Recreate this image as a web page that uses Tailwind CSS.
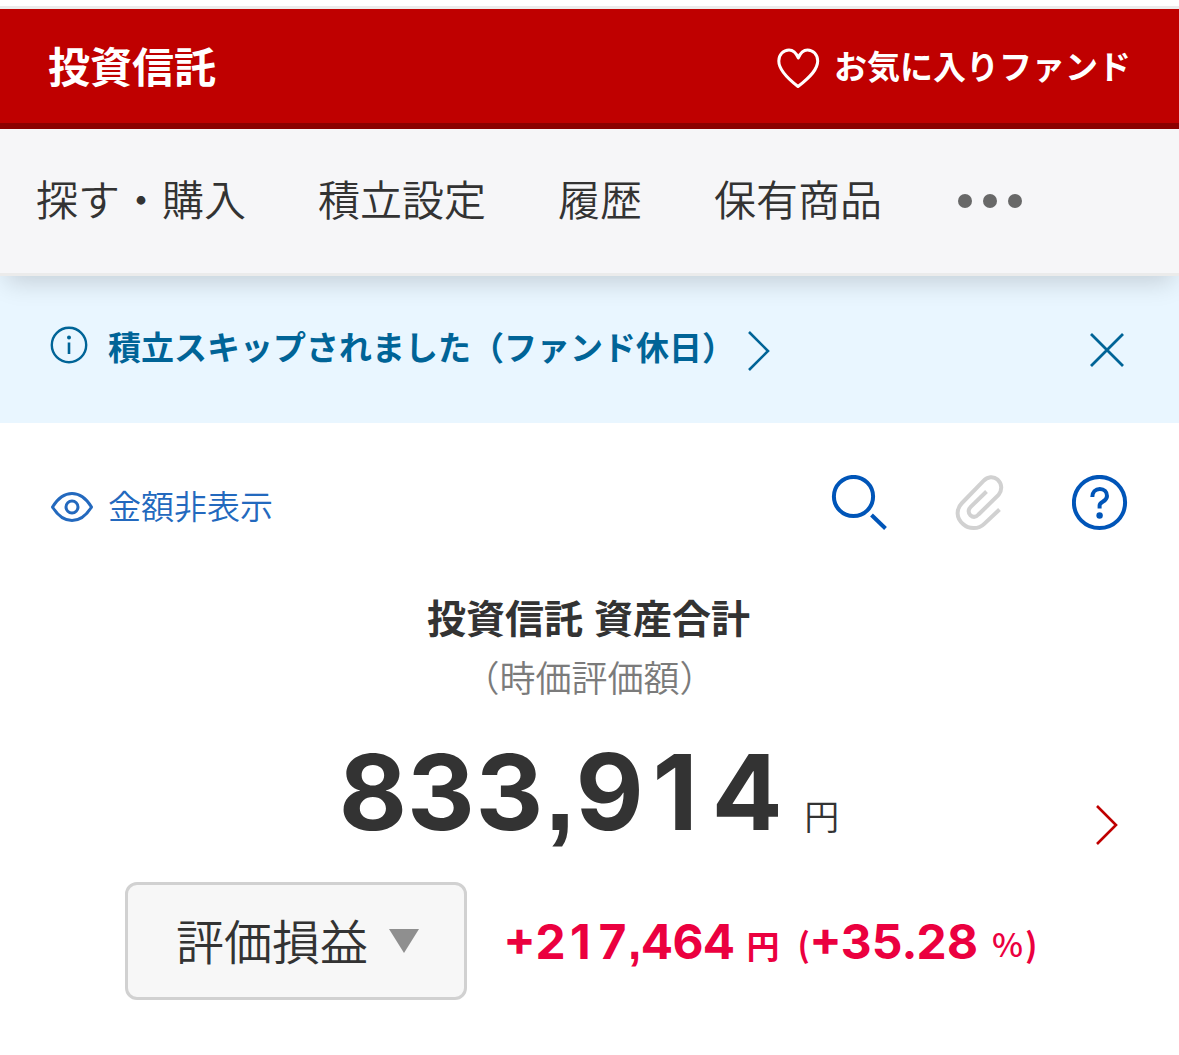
<!DOCTYPE html>
<html lang="ja">
<head>
<meta charset="UTF-8">
<meta name="viewport" content="width=device-width, initial-scale=1.0">
<title>投資信託</title>
<script src="https://cdn.jsdelivr.net/npm/@tailwindcss/browser@4"></script>
</head>
<body class="bg-white text-[#333] font-['Noto_Sans_CJK_JP',sans-serif] w-[1179px] h-[1055px] overflow-hidden">
<div class="h-[9px] border-b-3 border-[#ebebeb]"></div>
<header class="h-[120px] bg-[#bf0000] border-b-6 border-[#8c0000] text-white flex items-center justify-between pl-12 pr-12">
<h1 class="text-[42px] leading-none font-bold -mt-0.5">投資信託</h1>
<a href="#" class="flex items-center text-[33px] leading-none font-bold">
<svg class="w-[44px] h-[44px] mr-[14px] mt-[6px]" viewBox="0 0 44 44" fill="none" stroke="currentColor" stroke-width="3" stroke-linejoin="round">
<path d="M22 39.500C9 29.500 2.800 22 2.800 14C2.800 7.500 7.500 3 13 3C17 3 20 5.500 22.300 11C24.500 5.500 27.500 3 31.500 3C37 3 41.700 7.500 41.700 14C41.700 22 35 29.500 22 39.500Z"/>
</svg>
<span class="-mt-px">お気に入りファンド</span>
</a>
</header>
<nav class="relative h-[147px] bg-[#f6f6f8] border-b-3 border-[#ebebeb] flex items-center gap-[72px] pl-9 pb-1.5 text-[42px] leading-none font-[350] shadow-[0_12px_24px_-6px_rgba(0,0,0,0.16)]">
<a href="#">探す・購入</a>
<a href="#">積立設定</a>
<a href="#">履歴</a>
<a href="#">保有商品</a>
<span class="flex gap-[11px] ml-1 mt-[6px]">
<i class="size-[14px] rounded-full bg-[#686868]"></i>
<i class="size-[14px] rounded-full bg-[#686868]"></i>
<i class="size-[14px] rounded-full bg-[#686868]"></i>
</span>
</nav>
<section class="h-[147px] bg-[#e9f6ff] text-[#006497] flex items-start pt-[46px] pl-[50px] pr-[54px]">
<svg class="size-[38px] mt-1 mr-5" viewBox="0 0 38 38" fill="none" stroke="currentColor">
<circle cx="19" cy="19" r="17.200" stroke-width="2.400"/>
<path d="M19 16.500V28" stroke-width="2.600"/>
<circle cx="19" cy="11.500" r="2" fill="currentColor" stroke="none"/>
</svg>
<p class="text-[33px] leading-[48px] font-bold">積立スキップされました（ファンド休日）</p>
<svg class="w-6 h-10 mt-[9px] ml-[12px]" viewBox="0 0 24 40" fill="none" stroke="currentColor" stroke-width="2.600">
<path d="M2 1L21 20L2 39"/>
</svg>
<svg class="size-[36px] mt-[10px] ml-auto" viewBox="0 0 36 36" fill="none" stroke="currentColor" stroke-width="2.800">
<path d="M2 2L34 34M34 2L2 34"/>
</svg>
</section>
<main>
<div class="h-[156px] flex items-start justify-between pt-[52px] pl-[50px] pr-[51px]">
<button class="flex items-center text-[#2369be] text-[33px] leading-[60px] font-[350]">
<svg class="w-[44px] h-[32px] mr-[14px] mt-1" viewBox="0 0 44 32" fill="none" stroke="currentColor" stroke-width="3">
<path d="M2.500 16C8 7 14.500 2.500 22 2.500S36 7 41.500 16C36 25 29.500 29.500 22 29.500S8 25 2.500 16Z" stroke-linejoin="round"/>
<circle cx="22" cy="16" r="6"/>
</svg>
<span>金額非表示</span>
</button>
<div class="flex text-[#0055b8]">
<svg class="size-[56px] mr-[67px]" viewBox="0 0 56 56" fill="none" stroke="currentColor" stroke-width="4">
<circle cx="22.500" cy="21.500" r="19.600"/>
<path d="M40.500 40L54.500 53.500"/>
</svg>
<svg class="w-[50px] h-[56px] mr-[68px] text-[#d1d1d1]" viewBox="0 0 50 56" fill="none" stroke="currentColor" stroke-width="4">
<path d="M45.500 34.500L30.500 48.600C24.500 54.500 15 54.500 9 49C2 43 2 34 8 28L29.500 5.800C33.500 1.500 39.500 1 43.500 4.500C48 8.500 48.500 15 44.500 20L24.500 39.500C21.700 42.500 18.700 42.300 16.400 40.300C14 38 14 34.500 16.700 31.800L32.500 16.500"/>
</svg>
<svg class="size-[56px]" viewBox="0 0 56 56" fill="none" stroke="currentColor" stroke-width="4">
<circle cx="27.500" cy="27.500" r="25.600"/>
<path d="M20.300 22C20.300 17 23.500 14 27.800 14C32.200 14 35 17 35 21C35 27 27.600 26.500 27.600 30.500V33.500"/>
<circle cx="27.600" cy="40.500" r="3.200" fill="currentColor" stroke="none"/>
</svg>
</div>
</div>
<div class="text-center pt-[13px]">
<h2 class="text-[39px] leading-[48px] font-bold -ml-0.5"><span class="mr-[2px]">投資信託</span> 資産合計</h2>
<p class="text-[36px] leading-[48px] mt-[12px] font-[350] text-[#7b7b7b]">（時価評価額）</p>
</div>
<div class="flex h-[166px] pl-[339px] pr-[60px] justify-between">
<p class="flex items-baseline leading-[150px] pt-[17px]">
<span class="font-[Inter] tabular-nums font-bold text-[105px] tracking-[0.8px]">833<span class="font-['Liberation_Sans'] text-[108px] leading-none">,</span>9<span class="inline-block w-[69px] pl-[8px] proportional-nums leading-none">1</span>4</span>
<span class="text-[35px] leading-none ml-[22px] font-[350]">円</span>
</p>
<svg class="w-6 h-10 mt-[105px] text-[#bf0000]" viewBox="0 0 24 40" fill="none" stroke="currentColor" stroke-width="2.600">
<path d="M2 1L21 20L2 39"/>
</svg>
</div>
<div class="flex items-center mt-[16px] pl-[125px]">
<button class="w-[342px] h-[118px] rounded-xl border-3 border-[#d1d1d1] bg-[#f7f7f7] flex items-center pl-12 text-[48px] leading-none font-[350]">
<span class="-mt-1">評価損益</span>
<svg class="w-[30px] h-[24px] ml-[21px]" viewBox="0 0 30 24" fill="#8f8f8f"><path d="M0 0H30L15 24Z"/></svg>
</button>
<p class="flex items-baseline text-[#eb003f] font-bold ml-[37px] mt-0.5 leading-[60px]">
<span class="font-[Inter] tabular-nums text-[48px]">+2<span class="inline-block w-[31px] pl-[4px] proportional-nums leading-none">1</span>7<span class="font-['Liberation_Sans'] leading-none">,</span>464</span>
<span class="text-[33px] leading-none ml-3">円</span>
<span class="text-[33px] leading-none ml-[18px] relative -top-0.5">(</span>
<span class="font-[Inter] tabular-nums text-[48px]">+35.28</span>
<span class="text-[33px] leading-none font-medium ml-3.5 relative -top-0.5">%</span>
<span class="text-[33px] leading-none ml-0.5 relative -top-0.5">)</span>
</p>
</div>
</main>
</body>
</html>
